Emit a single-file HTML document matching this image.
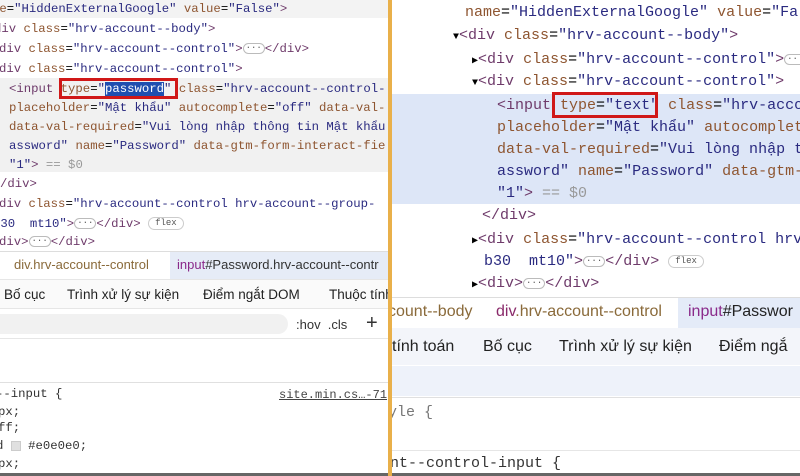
<!DOCTYPE html>
<html><head><meta charset="utf-8"><style>
*{margin:0;padding:0;box-sizing:border-box}
body{width:800px;height:476px;overflow:hidden;background:#fff;position:relative;font-family:"Liberation Mono",monospace}
.p{position:absolute;top:0;height:476px;overflow:hidden;background:#fff}
.l{position:absolute;white-space:pre;line-height:1}
.t{color:#6e3a6a}.a{color:#8e5530}.v{color:#2a2a80}.g{color:#999}
.s{font-family:"Liberation Sans",sans-serif;position:absolute;white-space:pre;color:#222}
.dots{display:inline-block;border:1px solid #bbb;border-radius:6px;font-size:9px;padding:0 2px;color:#555;vertical-align:middle;line-height:9px}
.flex{display:inline-block;border:1px solid #ccc;border-radius:8px;font-size:9px;padding:1px 6px;color:#555;vertical-align:middle}
</style></head><body>
<!-- LEFT -->
<div class="p" style="left:0;width:388px;font-size:12.3px">
 <div style="position:absolute;left:0;top:0;width:388px;height:18px;background:#f3f3f3"></div>
 <div style="position:absolute;left:0;top:78px;width:388px;height:94px;background:#f1f1f1"></div>
 <div class="l" style="left:-8px;top:3px"><span class="a">me</span>=<span class="v">"HiddenExternalGoogle"</span> <span class="a">value</span>=<span class="v">"False"</span><span class="t">&gt;</span></div>
 <div class="l" style="left:-6px;top:23px"><span class="t">div</span> <span class="a">class</span>=<span class="v">"hrv-account--body"</span><span class="t">&gt;</span></div>
 <div class="l" style="left:-1px;top:43px"><span class="t">div</span> <span class="a">class</span>=<span class="v">"hrv-account--control"</span><span class="t">&gt;</span><span class="dots">···</span><span class="t">&lt;/div&gt;</span></div>
 <div class="l" style="left:-1px;top:63px"><span class="t">div</span> <span class="a">class</span>=<span class="v">"hrv-account--control"</span><span class="t">&gt;</span></div>
 <div class="l" style="left:9px;top:83px"><span class="t">&lt;input</span> <span class="a">type</span>=<span class="v">"<span style="background:#1f4fb0;color:#fff">password</span>"</span> <span class="a">class</span>=<span class="v">"hrv-account--control-</span></div>
 <div style="position:absolute;left:59px;top:78px;width:119px;height:21px;border:3px solid #d01818"></div>
 <div class="l" style="left:9px;top:102px"><span class="a">placeholder</span>=<span class="v">"Mật khẩu"</span> <span class="a">autocomplete</span>=<span class="v">"off"</span> <span class="a">data-val-</span></div>
 <div class="l" style="left:9px;top:121px"><span class="a">data-val-required</span>=<span class="v">"Vui lòng nhập thông tin Mật khẩu</span></div>
 <div class="l" style="left:9px;top:140px"><span class="v">assword"</span> <span class="a">name</span>=<span class="v">"Password"</span> <span class="a">data-gtm-form-interact-fie</span></div>
 <div class="l" style="left:9px;top:159px"><span class="v">"1"</span><span class="t">&gt;</span> <span class="g">== $0</span></div>
 <div class="l" style="left:0px;top:178px"><span class="t">/div&gt;</span></div>
 <div class="l" style="left:-1px;top:198px"><span class="t">div</span> <span class="a">class</span>=<span class="v">"hrv-account--control hrv-account--group-</span></div>
 <div class="l" style="left:-7px;top:217px"><span class="v">b30  mt10"</span><span class="t">&gt;</span><span class="dots">···</span><span class="t">&lt;/div&gt;</span> <span class="flex">flex</span></div>
 <div class="l" style="left:-1px;top:236px"><span class="t">div&gt;</span><span class="dots">···</span><span class="t">&lt;/div&gt;</span></div>
 <div style="position:absolute;left:0;top:251px;width:388px;height:1px;background:#ddd"></div>
 <div style="position:absolute;left:170px;top:252px;width:218px;height:27px;background:#e6ecf7"></div>
 <div class="s" style="left:14px;top:257px;font-size:13px;color:#8a6a3a">div.hrv-account--control</div>
 <div class="s" style="left:177px;top:257px;font-size:13px"><span style="color:#8a2a8a">input</span><span style="color:#333">#Password.hrv-account--contr</span></div>
 <div style="position:absolute;left:0;top:279px;width:388px;height:30px;background:#fafafa;border-top:1px solid #e6e6e6;border-bottom:1px solid #e6e6e6"></div>
 <div class="s" style="left:4px;top:287px;font-size:13.5px">Bố cục</div>
 <div class="s" style="left:67px;top:287px;font-size:13.5px">Trình xử lý sự kiện</div>
 <div class="s" style="left:203px;top:287px;font-size:13.5px">Điểm ngắt DOM</div>
 <div class="s" style="left:329px;top:287px;font-size:13.5px">Thuộc tính</div>
 <div style="position:absolute;left:0;top:314px;width:288px;height:20px;background:#f1f1f1;border-radius:0 10px 10px 0"></div>
 <div class="s" style="left:296px;top:317px;font-size:13px;color:#333">:hov  .cls</div>
 <div class="s" style="left:366px;top:312px;font-size:20px;color:#333">+</div>
 <div style="position:absolute;left:0;top:338px;width:388px;height:1px;background:#e6e6e6"></div>
 <div style="position:absolute;left:0;top:382px;width:388px;height:1px;background:#e0e0e0"></div>
 <div class="l" style="left:-4px;top:388px;color:#333">--input {</div>
 <div class="l" style="left:279px;top:389px;color:#444;text-decoration:underline;font-size:12px">site.min.cs…-71</div>
 <div class="l" style="left:-2px;top:406px;color:#333">px;</div>
 <div class="l" style="left:-2px;top:422px;color:#333">ff;</div>
 <div class="l" style="left:-4px;top:440px;color:#333">d <span style="display:inline-block;width:10px;height:10px;background:#e0e0e0;border:1px solid #ccc;vertical-align:middle"></span> #e0e0e0;</div>
 <div class="l" style="left:-2px;top:458px;color:#333">px;</div>
 <div style="position:absolute;left:0;top:473px;width:388px;height:3px;background:#666"></div>
</div>
<div style="position:absolute;left:388px;top:0;width:4px;height:476px;background:#e9b04a"></div>
<!-- RIGHT -->
<div class="p" style="left:392px;width:408px;font-size:15px">
 <div style="position:absolute;left:0;top:94px;width:408px;height:110px;background:#dde6f7"></div>
 <div class="l" style="left:73px;top:5px"><span class="a">name</span>=<span class="v">"HiddenExternalGoogle"</span> <span class="a">value</span>=<span class="v">"Fal</span></div>
 <div class="l" style="left:61px;top:28px"><span style="font-size:10px">▼</span><span class="t">&lt;div</span> <span class="a">class</span>=<span class="v">"hrv-account--body"</span><span class="t">&gt;</span></div>
 <div class="l" style="left:80px;top:52px"><span style="font-size:10px">▶</span><span class="t">&lt;div</span> <span class="a">class</span>=<span class="v">"hrv-account--control"</span><span class="t">&gt;</span><span class="dots">···</span></div>
 <div class="l" style="left:80px;top:74px"><span style="font-size:10px">▼</span><span class="t">&lt;div</span> <span class="a">class</span>=<span class="v">"hrv-account--control"</span><span class="t">&gt;</span></div>
 <div class="l" style="left:105px;top:98px"><span class="t">&lt;input</span> <span class="a">type</span>=<span class="v">"text"</span> <span class="a">class</span>=<span class="v">"hrv-acco</span></div>
 <div style="position:absolute;left:160px;top:92px;width:106px;height:26px;border:3px solid #d01818"></div>
 <div class="l" style="left:105px;top:120px"><span class="a">placeholder</span>=<span class="v">"Mật khẩu"</span> <span class="a">autocomplet</span></div>
 <div class="l" style="left:105px;top:142px"><span class="a">data-val-required</span>=<span class="v">"Vui lòng nhập t</span></div>
 <div class="l" style="left:105px;top:164px"><span class="v">assword"</span> <span class="a">name</span>=<span class="v">"Password"</span> <span class="a">data-gtm-</span></div>
 <div class="l" style="left:105px;top:186px"><span class="v">"1"</span><span class="t">&gt;</span> <span class="g">== $0</span></div>
 <div class="l" style="left:90px;top:208px"><span class="t">&lt;/div&gt;</span></div>
 <div class="l" style="left:80px;top:232px"><span style="font-size:10px">▶</span><span class="t">&lt;div</span> <span class="a">class</span>=<span class="v">"hrv-account--control hrv</span></div>
 <div class="l" style="left:92px;top:254px"><span class="v">b30  mt10"</span><span class="t">&gt;</span><span class="dots">···</span><span class="t">&lt;/div&gt;</span> <span class="flex">flex</span></div>
 <div class="l" style="left:80px;top:276px"><span style="font-size:10px">▶</span><span class="t">&lt;div&gt;</span><span class="dots">···</span><span class="t">&lt;/div&gt;</span></div>
 <div style="position:absolute;left:0;top:297px;width:408px;height:1px;background:#ddd"></div>
 <div style="position:absolute;left:286px;top:298px;width:122px;height:30px;background:#e4ebf8"></div>
 <div class="s" style="left:-4px;top:303px;font-size:16px;color:#8a6a3a">count--body</div>
 <div class="s" style="left:104px;top:303px;font-size:16px;color:#8a6a3a"><span style="color:#8a2a6a">div</span>.hrv-account--control</div>
 <div class="s" style="left:296px;top:303px;font-size:16px"><span style="color:#8a2a8a">input</span>#Passwor</div>
 <div style="position:absolute;left:0;top:328px;width:408px;height:37px;background:#f3f5fa"></div>
 <div class="s" style="left:0px;top:338px;font-size:16px">tính toán</div>
 <div class="s" style="left:91px;top:338px;font-size:16px">Bố cục</div>
 <div class="s" style="left:167px;top:338px;font-size:16px">Trình xử lý sự kiện</div>
 <div class="s" style="left:327px;top:338px;font-size:16px">Điểm ngắ</div>
 <div style="position:absolute;left:0;top:366px;width:408px;height:30px;background:#eef2fa"></div>
 <div style="position:absolute;left:0;top:397px;width:408px;height:1px;background:#e0e0e0"></div>
 <div class="l" style="left:-4px;top:405px;color:#777">yle {</div>
 <div style="position:absolute;left:0;top:450px;width:408px;height:1px;background:#e6e6e6"></div>
 <div class="l" style="left:-2px;top:456px;color:#333">nt--control-input {</div>
 <div style="position:absolute;left:0;top:473px;width:408px;height:3px;background:#666"></div>
</div>
</body></html>
